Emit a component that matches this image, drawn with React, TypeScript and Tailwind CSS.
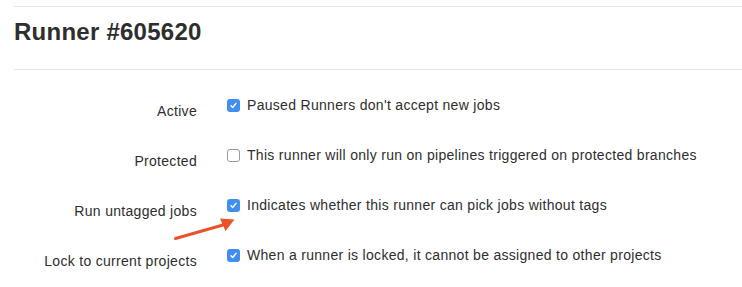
import React from "react";

const rows = [
  { label: "Active", text: "Paused Runners don't accept new jobs", checked: true },
  { label: "Protected", text: "This runner will only run on pipelines triggered on protected branches", checked: false },
  { label: "Run untagged jobs", text: "Indicates whether this runner can pick jobs without tags", checked: true },
  { label: "Lock to current projects", text: "When a runner is locked, it cannot be assigned to other projects", checked: true },
];

function Box({ checked }: { checked: boolean }) {
  if (checked) {
    return (
      <span className="flex h-[13px] w-[13px] shrink-0 items-center justify-center rounded-[3px] bg-[#3f8ef0]">
        <svg width="9" height="9" viewBox="0 0 9 9">
          <path d="M2 4.8 L3.7 6.5 L7 2.4" fill="none" stroke="white" strokeWidth="1.5" strokeLinecap="round" strokeLinejoin="round" />
        </svg>
      </span>
    );
  }
  return <span className="block h-[13px] w-[13px] shrink-0 rounded-[3px] border border-[#9a9a9a] bg-white" />;
}

export default function App() {
  return (
    <div
      className="relative h-[287px] w-full overflow-hidden bg-white pl-[14px] pt-[6px] text-[#2e2e2e]"
      style={{ fontFamily: '"Liberation Sans", Arial, sans-serif' }}
    >
      <div className="border-t border-[#e5e5e5]" />
      <h3 className="mt-[9px] mb-[21px] text-[24px] font-bold leading-[32px] tracking-[0.25px] text-[#2e2e2e]">
        Runner #605620
      </h3>
      <div className="border-t border-[#e5e5e5]" />
      <div className="mt-[25px] flex flex-col">
        {rows.map((r) => (
          <div key={r.label} className="flex h-[50px] items-start text-[14px] leading-[20px] tracking-[0.3px]">
            <div className="w-[183px] pt-[6px] text-right">{r.label}</div>
            <div className="ml-[30px] flex items-center gap-[7px]">
              <Box checked={r.checked} />
              <span>{r.text}</span>
            </div>
          </div>
        ))}
      </div>
      <svg className="pointer-events-none absolute left-0 top-0" width="742" height="287">
        <path d="M175.5 238.5 L223 225" stroke="#e8532b" strokeWidth="3" strokeLinecap="round" />
        <path d="M220 218.5 L234.5 219.5 L225.5 231 Z" fill="#e8532b" />
      </svg>
    </div>
  );
}
